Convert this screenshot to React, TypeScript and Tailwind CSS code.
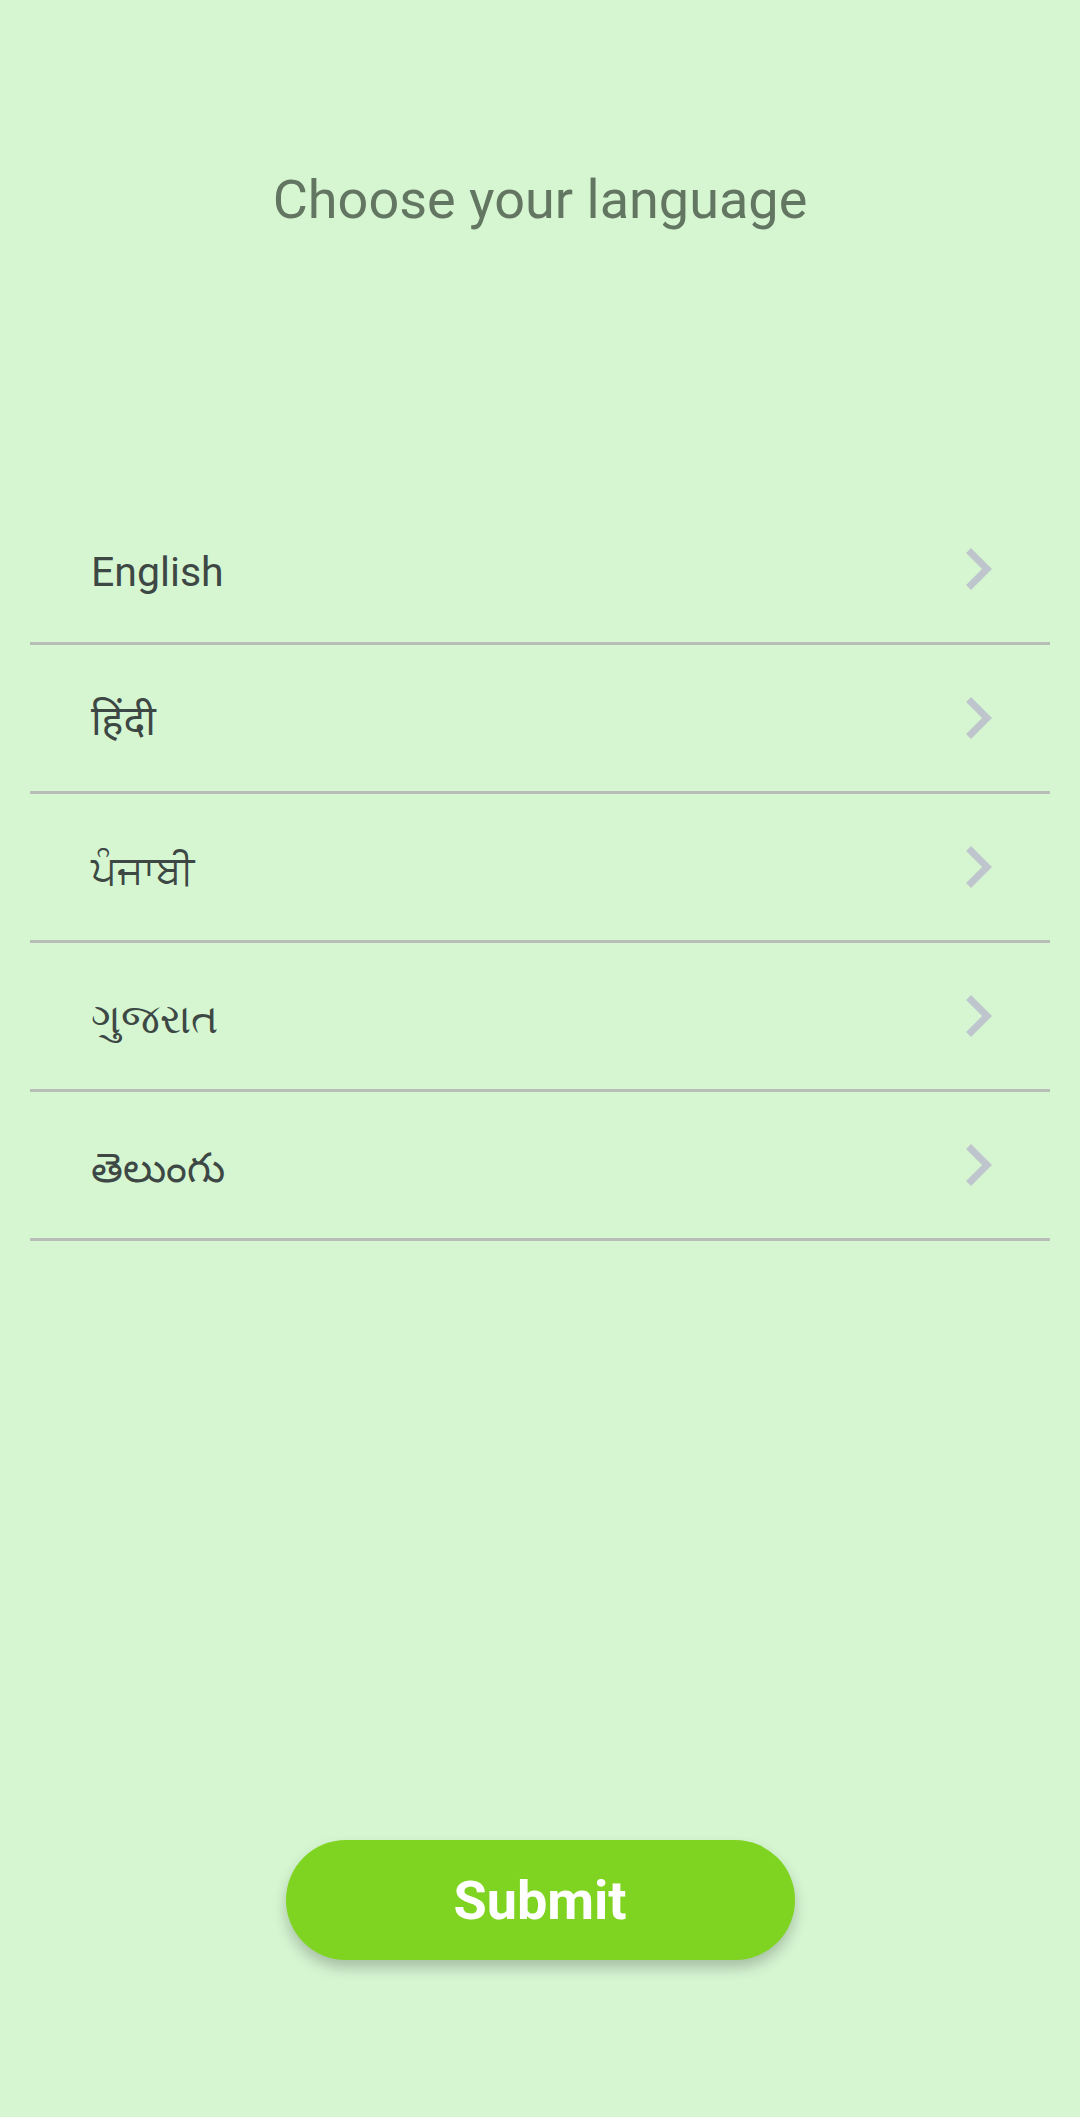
import React from "react";

const langs = ["English", "हिंदी", "ਪੰਜਾਬੀ", "ગુજરાત", "తెలుంగు"];

function Chevron() {
  return (
    <svg width="84" height="84" viewBox="0 0 24 24" className="shrink-0">
      <path d="M10 6L8.59 7.41 13.17 12l-4.58 4.59L10 18l6-6z" fill="#bec5cc" />
    </svg>
  );
}

export default function App() {
  return (
    <div
      className="min-h-[2117px] w-full bg-[#d6f6d2] flex flex-col"
      style={{ fontFamily: "Roboto, 'Noto Sans', sans-serif" }}
    >
      <h1 className="pt-[166px] text-center text-[54px] leading-[68px] text-[#627661] font-normal">
        Choose your language
      </h1>
      <div className="mt-[262px] mx-[30px] flex flex-col">
        {langs.map((l) => (
          <div
            key={l}
            className="h-[149px] border-b-[3px] border-[#b9bdb7] flex items-center justify-between pl-[61px] pr-[30px]"
          >
            <span className="pt-[8px] text-[41px] text-[#3d4845]">{l}</span>
            <Chevron />
          </div>
        ))}
      </div>
      <div className="flex justify-center mt-[599px]">
        <button className="w-[509px] h-[120px] rounded-full bg-[#7fd421] text-white font-bold text-[54px] shadow-[0_8px_14px_rgba(0,0,0,0.22)]">
          Submit
        </button>
      </div>
    </div>
  );
}
